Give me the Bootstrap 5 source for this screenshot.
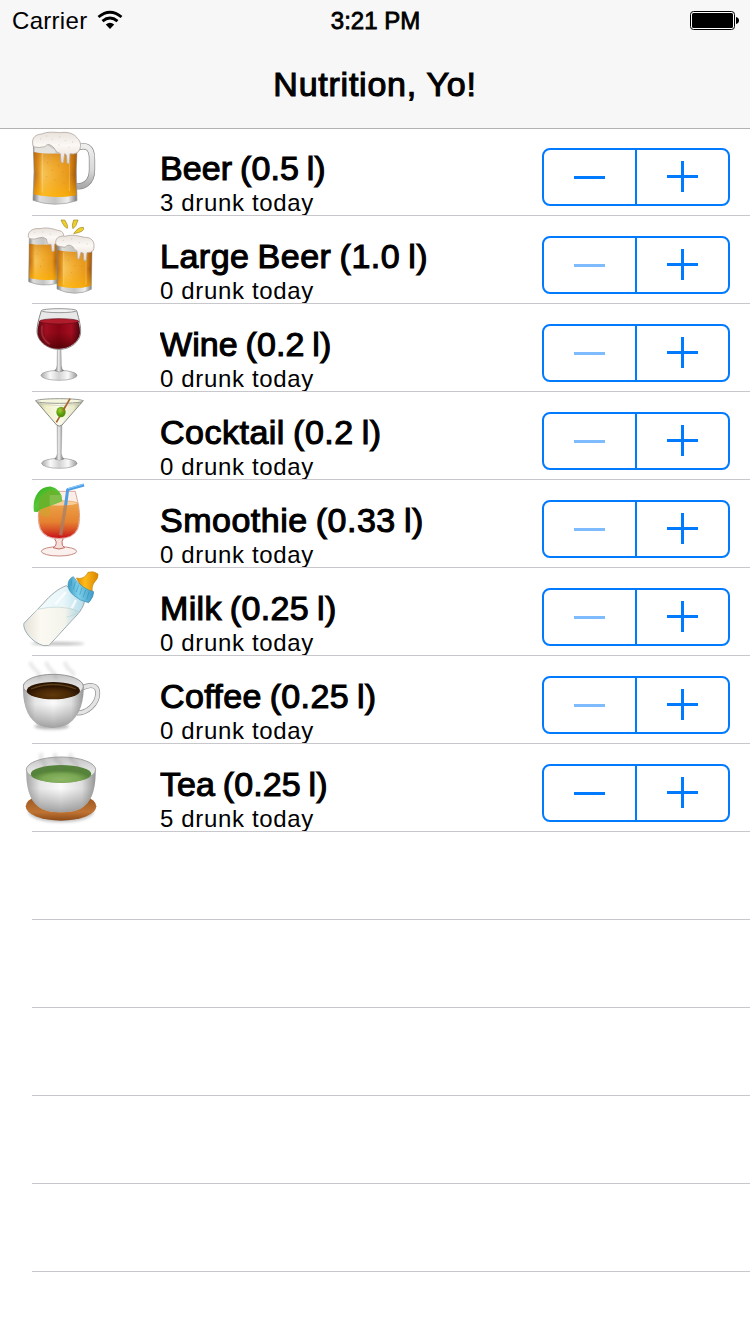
<!DOCTYPE html>
<html lang="en">
<head>
<meta charset="utf-8">
<meta name="viewport" content="width=device-width, initial-scale=1">
<title>Nutrition, Yo!</title>
<link href="https://cdn.jsdelivr.net/npm/bootstrap@5.3.0/dist/css/bootstrap.min.css" rel="stylesheet">
<script src="https://cdn.jsdelivr.net/npm/bootstrap@5.3.0/dist/js/bootstrap.bundle.min.js" defer></script>
<style>
body{font-family:"Liberation Sans",Arial,sans-serif;color:#000;background:#fff;height:1334px;overflow:hidden}
.topbar{height:128px;background:#f7f7f7;box-shadow:0 1px 0 #b2b2b2;z-index:2}
.status{height:40px;padding:0 11px 0 12px;font-size:24px;line-height:42px}
.status-side{flex:1 1 0}
.carrier{letter-spacing:.3px}
.wifi{margin:10px 0 0 10px}
.battery{margin-top:11px}
.medium{-webkit-text-stroke:.8px #000}
.title{font-size:34px;line-height:40px;margin:24px 0 0;font-weight:400;letter-spacing:.75px;-webkit-text-stroke:1.1px #000}
.drink{height:88px;padding:0 20px 0 15px;background:linear-gradient(#c8c7cc,#c8c7cc) 32px 100%/100% 1px no-repeat}
.pic{width:90px;height:88px;flex:none;margin-right:55px}
.info{height:87px;overflow:hidden;padding-top:20px}
.drink-name{font-size:34px;line-height:40px;height:40px;font-weight:400;margin:0;white-space:nowrap;letter-spacing:.35px;word-spacing:-1.8px;-webkit-text-stroke:1.1px #000}
.name-tight{letter-spacing:.1px}
.name-wide{letter-spacing:.5px}
.drink-count{font-size:24px;line-height:28px;margin-top:1px;letter-spacing:.65px;white-space:nowrap}
.stepper{width:188px;height:58px;margin-top:20px;border:2px solid #007aff;border-radius:8px;flex:none}
.stepper .btn{flex:1 1 0;padding:0;border:0;border-radius:0;color:#007aff;display:flex}
.stepper .btn+.btn{border-left:2px solid #007aff;flex:0 0 93px}
.stepper .btn:disabled{opacity:1;color:#7fbcff}
.stepper svg{width:91px;height:54px}
</style>
</head>
<body>
<svg width="0" height="0" class="position-absolute" aria-hidden="true">
<defs>
<symbol id="minus" viewBox="0 0 91 54"><path d="M30 26h31v3H30z" fill="currentColor"/></symbol>
<symbol id="plus" viewBox="0 0 91 54"><path d="M30 25h31v3H30zM44 11h3v31h-3z" fill="currentColor"/></symbol>
<linearGradient id="beer"><stop offset="0" stop-color="#b8660c"/><stop offset=".12" stop-color="#e09522"/><stop offset=".2" stop-color="#f6c45a"/><stop offset=".45" stop-color="#f3b136"/><stop offset=".8" stop-color="#e8981a"/><stop offset="1" stop-color="#9c4d05"/></linearGradient>
<linearGradient id="beerglow" x2="0" y2="1"><stop offset="0" stop-color="#c06a10" stop-opacity=".45"/><stop offset=".5" stop-color="#f5a81d" stop-opacity="0"/><stop offset="1" stop-color="#ffb400" stop-opacity=".7"/></linearGradient>
<linearGradient id="foam" x2="0" y2="1"><stop offset="0" stop-color="#e9e2dc"/><stop offset=".4" stop-color="#fbf8f5"/><stop offset="1" stop-color="#e8d8ce"/></linearGradient>
<linearGradient id="glass"><stop offset="0" stop-color="#777"/><stop offset=".15" stop-color="#ddd"/><stop offset=".5" stop-color="#c4c4c2"/><stop offset=".8" stop-color="#eee"/><stop offset="1" stop-color="#777"/></linearGradient>
<linearGradient id="handle" x2="0" y2="1"><stop offset="0" stop-color="#eee"/><stop offset=".6" stop-color="#d8d8d8"/><stop offset="1" stop-color="#aaa"/></linearGradient>
<linearGradient id="wine"><stop offset="0" stop-color="#5c0a14"/><stop offset=".2" stop-color="#a00f20"/><stop offset=".5" stop-color="#870414"/><stop offset=".8" stop-color="#a40e20"/><stop offset="1" stop-color="#4c0610"/></linearGradient>
<linearGradient id="winedark" x2="0" y2="1"><stop offset=".4" stop-color="#400" stop-opacity="0"/><stop offset="1" stop-color="#300" stop-opacity=".6"/></linearGradient>
<linearGradient id="stem"><stop offset="0" stop-color="#666"/><stop offset=".45" stop-color="#eee"/><stop offset="1" stop-color="#666"/></linearGradient>
<linearGradient id="foot"><stop offset="0" stop-color="#aaa"/><stop offset=".25" stop-color="#fafafa"/><stop offset=".5" stop-color="#d2d2d2"/><stop offset=".75" stop-color="#fafafa"/><stop offset="1" stop-color="#999"/></linearGradient>
<linearGradient id="martini"><stop offset="0" stop-color="#a9aa98"/><stop offset=".2" stop-color="#eeeec4"/><stop offset=".5" stop-color="#fbfbed"/><stop offset=".8" stop-color="#e9eac6"/><stop offset="1" stop-color="#999b88"/></linearGradient>
<radialGradient id="olive" cx=".4" cy=".35"><stop offset="0" stop-color="#9bd02c"/><stop offset="1" stop-color="#54930a"/></radialGradient>
<linearGradient id="juice" x2="0" y2="1"><stop offset="0" stop-color="#eda347"/><stop offset=".55" stop-color="#e58230"/><stop offset=".8" stop-color="#d64a25"/><stop offset="1" stop-color="#c80f18"/></linearGradient>
<linearGradient id="lime" x2=".8" y2="1"><stop offset="0" stop-color="#2fae1a"/><stop offset=".5" stop-color="#58c637"/><stop offset="1" stop-color="#3fae1e"/></linearGradient>
<linearGradient id="bottle"><stop offset="0" stop-color="#c9e3ea"/><stop offset=".25" stop-color="#f3fbfd"/><stop offset=".65" stop-color="#e8f6fa"/><stop offset="1" stop-color="#b4dcea"/></linearGradient>
<linearGradient id="milk"><stop offset="0" stop-color="#e6e2d8"/><stop offset=".3" stop-color="#fbf9f2"/><stop offset=".75" stop-color="#f3f3ec"/><stop offset="1" stop-color="#b9dae2"/></linearGradient>
<linearGradient id="ring"><stop offset="0" stop-color="#3c9dc6"/><stop offset=".4" stop-color="#7fd0ea"/><stop offset="1" stop-color="#3f9cc6"/></linearGradient>
<linearGradient id="teat"><stop offset="0" stop-color="#e08c00"/><stop offset=".4" stop-color="#fdbb1b"/><stop offset="1" stop-color="#d98400"/></linearGradient>
<linearGradient id="china"><stop offset="0" stop-color="#a5a5a5"/><stop offset=".2" stop-color="#e6e6e6"/><stop offset=".5" stop-color="#fafafa"/><stop offset=".8" stop-color="#dedede"/><stop offset="1" stop-color="#949494"/></linearGradient>
<linearGradient id="chinashade" x2="0" y2="1"><stop offset=".45" stop-color="#777" stop-opacity="0"/><stop offset="1" stop-color="#666" stop-opacity=".6"/></linearGradient>
<linearGradient id="chinain" x2="0" y2="1"><stop offset="0" stop-color="#c4c4c4"/><stop offset=".5" stop-color="#e2e2e2"/><stop offset="1" stop-color="#fafafa"/></linearGradient>
<radialGradient id="coffee" cy=".75"><stop offset="0" stop-color="#60390a"/><stop offset=".6" stop-color="#4a2806"/><stop offset="1" stop-color="#2c1503"/></radialGradient>
<radialGradient id="tea" cy=".8"><stop offset="0" stop-color="#8fb766"/><stop offset=".6" stop-color="#7aa853"/><stop offset="1" stop-color="#558339"/></radialGradient>
<linearGradient id="saucer" x2="0" y2="1"><stop offset="0" stop-color="#8e4d1a"/><stop offset=".7" stop-color="#bf7434"/><stop offset="1" stop-color="#8c4a17"/></linearGradient>
<filter id="soft" x="-50%" y="-50%" width="200%" height="200%"><feGaussianBlur stdDeviation="4"/></filter>
</defs>
</svg>

<header class="topbar position-relative">
  <div class="status d-flex">
    <div class="status-side d-flex"><span class="carrier">Carrier</span>
      <svg class="wifi" width="26" height="20" viewBox="0 0 26 20"><g fill="none" stroke="#000"><path d="M1.500 7Q13 -2.600 24.500 7" stroke-width="2.900"/><path d="M5.500 11.200Q13 5 20.500 11.200" stroke-width="2.900"/></g><path d="M8.800 14.600Q13 11 17.200 14.600L13 18.900Z"/></svg>
    </div>
    <span class="medium">3:21 PM</span>
    <div class="status-side d-flex justify-content-end">
      <svg class="battery" width="49" height="19" viewBox="0 0 49 19"><rect x=".5" y=".5" width="44" height="18" rx="3" fill="#fff" stroke="#000"/><rect x="2" y="2" width="41" height="15" rx="1.500"/><path d="M46 6c4 .8 4 6.200 0 7z"/></svg>
    </div>
  </div>
  <h1 class="title text-center">Nutrition, Yo!</h1>
</header>

<main>
<ul class="list-unstyled m-0">
  <li class="drink d-flex">
    <svg class="pic" viewBox="0 0 270 264">
      <path d="M180 61C211 48 232 54 231 95V125C231 162 207 180 180 174" fill="none" stroke="#858585" stroke-width="19"/>
      <path d="M180 61C211 48 232 54 231 95V125C231 162 207 180 180 174" fill="none" stroke="url(#handle)" stroke-width="15"/>
      <path d="M55 50H186L184 130 186 218Q120 240 54 217L57 130Z" fill="url(#glass)" stroke="#999" stroke-width="2"/>
      <path d="M56 73Q120 82 185 73L182 140 184 202Q120 214 56 199L59 140Z" fill="url(#beer)"/>
      <path d="M56 73Q120 82 185 73L182 140 184 202Q120 214 56 199L59 140Z" fill="url(#beerglow)"/>
      <path d="M82 76V193M163 76V190" stroke="#ffdc83" stroke-width="3" opacity=".45"/>
      <g fill="#a85b0c" opacity=".4"><circle cx="98" cy="104" r="1.500"/><circle cx="112" cy="126" r="1.500"/><circle cx="131" cy="113" r="1.500"/><circle cx="144" cy="132" r="1.500"/><circle cx="95" cy="146" r="1.500"/><circle cx="120" cy="156" r="1.500"/><circle cx="147" cy="164" r="1.500"/></g>
      <path d="M58 55Q80 62 95 50L120 66 122 75Q85 77 58 72Z" fill="#e4e3e0"/>
      <path d="M53 45C51 29 62 19 81 18C98 10 120 13 137 14C158 10 180 18 187 31C202 42 198 68 185 75Q176 80 165 77L163 104Q160 112 156 104L154 81 149 77 146 101Q142 110 138 101L136 77Q123 74 117 60 100 41 90 56 71 61 58 57Q51 52 53 45Z" fill="url(#foam)" stroke="#b3a8a0" stroke-width="2.500"/>
      <g fill="#cbbdb3" opacity=".55"><circle cx="77" cy="33" r="2"/><circle cx="95" cy="24" r="2"/><circle cx="112" cy="34" r="2"/><circle cx="134" cy="26" r="2"/><circle cx="151" cy="38" r="2"/><circle cx="173" cy="42" r="2"/><circle cx="162" cy="58" r="2"/><circle cx="132" cy="51" r="2"/></g>
    </svg>
    <div class="info flex-grow-1"><h2 class="drink-name name-tight">Beer (0.5 l)</h2><div class="drink-count">3 drunk today</div></div>
    <div class="stepper d-flex"><button class="btn" aria-label="Less"><svg><use href="#minus"/></svg></button><button class="btn" aria-label="More"><svg><use href="#plus"/></svg></button></div>
  </li>
  <li class="drink d-flex">
    <svg class="pic" viewBox="0 0 270 264">
      <path d="M138 12H149Q160 28 157 37Q147 34 138 12ZM176 12H189Q184 32 174 38Q169 30 176 12ZM176 53Q190 32 205 34 212 47 176 53Z" fill="#ecd02c" stroke="#a08524" stroke-width="2"/>
      <path d="M43 65H128V202Q80 214 41 197Z" fill="url(#glass)" stroke="#999" stroke-width="2"/>
      <path d="M43 83Q83 90 128 83V190Q83 195 43 186Z" fill="url(#beer)"/><path d="M43 83Q83 90 128 83V190Q83 195 43 186Z" fill="url(#beerglow)"/>
      <path d="M40 59C40 42 59 36 75 38 95 33 113 38 128 43 147 44 150 60 141 76L119 84 118 104Q114 111 110 104L108 85 101 86Q95 81 94 69 84 60 70 66 58 72 45 68Q38 64 40 59Z" fill="url(#foam)" stroke="#b3a8a0" stroke-width="2.500"/>
      <path d="M126 88H231L229 220Q180 244 126 219Z" fill="url(#glass)" stroke="#999" stroke-width="2"/>
      <path d="M127 103Q178 112 230 104L228 209Q180 223 128 209Z" fill="url(#beer)"/><path d="M127 103Q178 112 230 104L228 209Q180 223 128 209Z" fill="url(#beerglow)"/>
      <path d="M146 109V206M213 109V206" stroke="#ffdc83" stroke-width="3" opacity=".45"/>
      <g fill="#a85b0c" opacity=".4"><circle cx="66" cy="114" r="1.500"/><circle cx="85" cy="131" r="1.500"/><circle cx="77" cy="151" r="1.500"/><circle cx="160" cy="132" r="1.500"/><circle cx="180" cy="149" r="1.500"/><circle cx="199" cy="151" r="1.500"/><circle cx="170" cy="169" r="1.500"/></g>
      <path d="M122 79C122 64 137 58 151 61 172 54 191 60 208 64 228 63 238 75 237 90Q238 105 226 109L216 110 214 132Q210 139 206 132L205 112 198 109 194 126Q191 134 187 126L186 105Q178 103 173 92 160 82 150 94 137 93 127 89 120 84 122 79Z" fill="url(#foam)" stroke="#b3a8a0" stroke-width="2.500"/>
      <g fill="#cbbdb3" opacity=".55"><circle cx="59" cy="49" r="2"/><circle cx="83" cy="48" r="2"/><circle cx="106" cy="54" r="2"/><circle cx="145" cy="73" r="2"/><circle cx="170" cy="69" r="2"/><circle cx="193" cy="80" r="2"/><circle cx="216" cy="84" r="2"/></g>
    </svg>
    <div class="info flex-grow-1"><h2 class="drink-name name-wide">Large Beer (1.0 l)</h2><div class="drink-count">0 drunk today</div></div>
    <div class="stepper d-flex"><button class="btn" disabled aria-label="Less"><svg><use href="#minus"/></svg></button><button class="btn" aria-label="More"><svg><use href="#plus"/></svg></button></div>
  </li>
  <li class="drink d-flex">
    <svg class="pic" viewBox="0 0 270 264">
      <ellipse cx="132" cy="214" rx="54" ry="15" fill="url(#foot)" stroke="#999" stroke-width="2"/>
      <path d="M127 132H138L139 184Q140 196 146 200 132 207 119 200 126 195 126 184Z" fill="url(#stem)" stroke="#777"/>
      <path d="M79 20Q65 62 66 84C67 111 96 136 132 136S196 112 197 84Q198 64 185 20Z" fill="#e8e8e8" stroke="#888" stroke-width="3"/>
      <path d="M73 52Q66 76 68 89C72 115 99 134 132 134S192 113 195 87Q196 73 190 52Z" fill="url(#wine)"/><path d="M73 52Q66 76 68 89C72 115 99 134 132 134S192 113 195 87Q196 73 190 52Z" fill="url(#winedark)"/>
      <ellipse cx="132" cy="52" rx="59" ry="8" fill="#b01c2c" stroke="#650c18" stroke-width="2"/>
      <ellipse cx="132" cy="20" rx="53" ry="6" fill="#f2f2f2" stroke="#999" stroke-width="3"/>
      <path d="M81 65Q75 104 105 121" fill="none" stroke="#d3576a" stroke-width="5" opacity=".35"/>
    </svg>
    <div class="info flex-grow-1"><h2 class="drink-name name-tight">Wine (0.2 l)</h2><div class="drink-count">0 drunk today</div></div>
    <div class="stepper d-flex"><button class="btn" disabled aria-label="Less"><svg><use href="#minus"/></svg></button><button class="btn" aria-label="More"><svg><use href="#plus"/></svg></button></div>
  </li>
  <li class="drink d-flex">
    <svg class="pic" viewBox="0 0 270 264">
      <ellipse cx="133" cy="214" rx="53" ry="15" fill="url(#foot)" stroke="#999" stroke-width="2"/>
      <path d="M126 97H141L139 184Q141 197 147 201 133 209 119 201 126 194 127 184Z" fill="url(#stem)" stroke="#888"/>
      <path d="M62 26L125 99Q133 106 141 99L205 26Z" fill="url(#martini)" stroke="#888" stroke-width="3"/>
      <ellipse cx="133" cy="27" rx="71" ry="7" fill="#f5f6dd" stroke="#999" stroke-width="3"/>
      <path d="M72 37Q133 45 195 37" fill="none" stroke="#c9cab0" stroke-width="2"/>
      <path d="M165 20L124 91" stroke="#a8622f" stroke-width="5"/><ellipse cx="138" cy="60" rx="14" ry="16" fill="url(#olive)"/><path d="M150 44l-5 9" stroke="#a8622f" stroke-width="4"/><circle cx="146" cy="55" r="3" fill="#c9672a"/>
    </svg>
    <div class="info flex-grow-1"><h2 class="drink-name name-wide">Cocktail (0.2 l)</h2><div class="drink-count">0 drunk today</div></div>
    <div class="stepper d-flex"><button class="btn" disabled aria-label="Less"><svg><use href="#minus"/></svg></button><button class="btn" aria-label="More"><svg><use href="#plus"/></svg></button></div>
  </li>
  <li class="drink d-flex">
    <svg class="pic" viewBox="0 0 270 264">
      <ellipse cx="132" cy="214" rx="53" ry="14" fill="#faf1ef" stroke="#c98a80" stroke-width="3"/>
      <path d="M124 170H141Q148 177 141 184 139 198 149 203 132 211 114 203 126 197 123 184 115 178 124 170Z" fill="#f6dfda" stroke="#c0695e" stroke-width="3"/>
      <path d="M85 34L74 78Q65 119 76 148 87 175 132 176 175 175 188 148 198 119 191 78L181 34Z" fill="#fbeee8" stroke="#d9968a" stroke-width="2.500"/>
      <path d="M76 68Q66 117 77 146 90 174 132 174 174 174 187 146 197 117 189 68Z" fill="url(#juice)"/>
      <ellipse cx="132" cy="70" rx="56" ry="8" fill="#f8cd96" stroke="#e39b4c" stroke-width="2"/>
      <path d="M152 74L137 166" stroke="#a77f68" stroke-width="10" opacity=".75"/>
      <path d="M207 15L158 29 152 75" fill="none" stroke="#4c9de3" stroke-width="9" stroke-linejoin="round"/><path d="M205 13L159 26" stroke="#8acbff" stroke-width="3"/>
      <path d="M57 95C50 51 75 17 109 20 130 24 143 44 141 64L75 89 68 96Z" fill="url(#lime)"/>
      <path d="M73 87C65 57 84 34 112 29 131 36 139 53 136 63Z" fill="#69b32c"/><path d="M104 45H141V64L104 78Z" fill="#a4cd70" opacity=".45"/>
      <path d="M75 89L105 77V109Q88 112 75 104Z" fill="#d0a12f" opacity=".7"/>
    </svg>
    <div class="info flex-grow-1"><h2 class="drink-name name-wide">Smoothie (0.33 l)</h2><div class="drink-count">0 drunk today</div></div>
    <div class="stepper d-flex"><button class="btn" disabled aria-label="Less"><svg><use href="#minus"/></svg></button><button class="btn" aria-label="More"><svg><use href="#plus"/></svg></button></div>
  </li>
  <li class="drink d-flex">
    <svg class="pic" viewBox="0 0 270 264">
      <ellipse cx="128" cy="227" rx="80" ry="5" fill="#777" opacity=".5" filter="url(#soft)"/>
      <path d="M154 53C131 61 105 82 86 105L27 166C22 183 48 224 88 233L103 231 168 160C190 138 206 120 209 97Z" fill="url(#bottle)" stroke="#8d979b" stroke-width="2.500"/>
      <path d="M68 124L29 167C26 184 53 222 90 231L102 230 162 163Q182 146 190 130 167 111 118 117 86 119 68 124Z" fill="url(#milk)"/>
      <path d="M68 124Q133 108 190 129 184 141 155 147" fill="none" stroke="#b9d5d6" stroke-width="2"/>
      <path d="M153 72L121 108M183 96L170 121" stroke="#fff" stroke-width="7" opacity=".8"/>
      <path d="M184 30C199 34 211 29 219 13Q235 7 249 18 251 30 239 42 229 53 232 73Q207 76 184 30Z" fill="url(#teat)" stroke="#c98510" stroke-width="2"/>
      <path d="M159 50Q160 32 175 26 184 42 205 57 220 68 236 71 236 88 221 104 195 99 176 82 158 66 159 50Z" fill="url(#ring)" stroke="#3a8bb0" stroke-width="2"/>
      <path d="M170 35l-2 19M181 42l-6 22M191 50l-7 22M201 59l-7 22M212 66l-8 22M222 72l-7 23" stroke="#2786af" stroke-width="3" opacity=".45"/>
    </svg>
    <div class="info flex-grow-1"><h2 class="drink-name">Milk (0.25 l)</h2><div class="drink-count">0 drunk today</div></div>
    <div class="stepper d-flex"><button class="btn" disabled aria-label="Less"><svg><use href="#minus"/></svg></button><button class="btn" aria-label="More"><svg><use href="#plus"/></svg></button></div>
  </li>
  <li class="drink d-flex">
    <svg class="pic" viewBox="0 0 270 264">
      <ellipse cx="110" cy="211" rx="52" ry="9" fill="#777" opacity=".55" filter="url(#soft)"/>
      <path d="M198 98C227 82 249 87 248 112 247 145 216 171 186 171" fill="none" stroke="#8c8c8c" stroke-width="15"/><path d="M198 98C227 82 249 87 248 112 247 145 216 171 186 171" fill="none" stroke="#e4e4e4" stroke-width="11"/>
      <path d="M24 85C22 135 32 180 66 204Q112 228 160 204C196 180 208 132 206 85Z" fill="url(#china)"/><path d="M24 85C22 135 32 180 66 204Q112 228 160 204C196 180 208 132 206 85Z" fill="url(#chinashade)"/>
      <ellipse cx="115" cy="91" rx="90" ry="36" fill="url(#chinain)" stroke="#979797" stroke-width="3"/>
      <ellipse cx="115" cy="104" rx="80" ry="26" fill="url(#coffee)"/><path d="M48 99Q115 72 183 99" fill="none" stroke="#8c672c" stroke-width="4" opacity=".5"/>
      <g fill="none" stroke="#888" stroke-width="11" opacity=".2" filter="url(#soft)"><path d="M45 18Q50 33 63 43T72 68M93 18Q98 34 111 45T123 70M149 18Q154 34 166 43T174 60"/></g>
    </svg>
    <div class="info flex-grow-1"><h2 class="drink-name">Coffee (0.25 l)</h2><div class="drink-count">0 drunk today</div></div>
    <div class="stepper d-flex"><button class="btn" disabled aria-label="Less"><svg><use href="#minus"/></svg></button><button class="btn" aria-label="More"><svg><use href="#plus"/></svg></button></div>
  </li>
  <li class="drink d-flex">
    <svg class="pic" viewBox="0 0 270 264">
      <ellipse cx="138" cy="203" rx="98" ry="32" fill="#777" opacity=".45" filter="url(#soft)"/>
      <ellipse cx="138" cy="187" rx="106" ry="43" fill="url(#saucer)"/>
      <path d="M34 75C32 125 42 168 71 189Q91 205 138 205 185 205 206 188C235 167 243 124 242 75Z" fill="url(#china)"/><path d="M34 75C32 125 42 168 71 189Q91 205 138 205 185 205 206 188C235 167 243 124 242 75Z" fill="url(#chinashade)"/>
      <ellipse cx="138" cy="77" rx="104" ry="38" fill="url(#chinain)" stroke="#a5a5a5" stroke-width="3"/>
      <ellipse cx="138" cy="90" rx="91" ry="27" fill="url(#tea)"/>
      <g fill="none" stroke="#777" stroke-width="12" opacity=".18" filter="url(#soft)"><path d="M81 28Q72 44 85 54T81 79M122 28Q115 45 132 55T128 82M169 28Q161 43 179 56T178 80"/></g>
    </svg>
    <div class="info flex-grow-1"><h2 class="drink-name name-tight">Tea (0.25 l)</h2><div class="drink-count">5 drunk today</div></div>
    <div class="stepper d-flex"><button class="btn" aria-label="Less"><svg><use href="#minus"/></svg></button><button class="btn" aria-label="More"><svg><use href="#plus"/></svg></button></div>
  </li>
  <li class="drink"></li><li class="drink"></li><li class="drink"></li><li class="drink"></li><li class="drink"></li>
</ul>
</main>
</body>
</html>
